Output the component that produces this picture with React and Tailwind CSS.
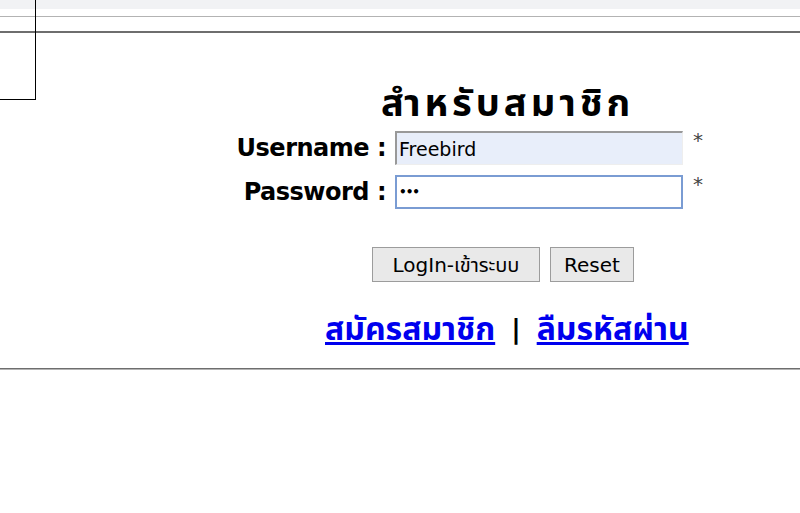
import React from "react";

export default function App() {
  const font = { fontFamily: '"DejaVu Sans", "Noto Sans Thai", "Noto Sans", sans-serif' };
  return (
    <div className="relative w-[800px] h-[513px] bg-white overflow-hidden" style={font}>
      <div className="absolute left-0 top-0 w-[36px] h-[100px] border-r border-b border-black" />
      <div className="h-[9px] bg-[#f1f2f4]" />
      <div className="h-[7px]" />
      <div className="h-px bg-[#b3b3b3]" />
      <div className="h-[14px]" />
      <div className="h-[2px] bg-[#6e6e6e]" />
      <div className="h-[335px] flex flex-col">
        <div className="pl-[381px] pt-[48px] h-[93px] text-[38px] font-bold leading-[44px] text-black tracking-[4px] whitespace-nowrap">สำหรับสมาชิก</div>
        <div className="flex items-center h-[44px]">
          <div className="w-[390px] pr-[4px] text-right text-[24px] font-bold text-black tracking-[-0.5px]">Username :</div>
          <input readOnly value="Freebird" className="ml-[5px] w-[288px] h-[34px] bg-[#e8eefa] border-t-2 border-l-2 border-t-[#999] border-l-[#999] border-r border-b border-r-[#eee] border-b-[#eee] px-[2px] text-[19px] text-black outline-none" style={{ fontFamily: '"DejaVu Sans", sans-serif' }} />
          <span className="ml-[10px] self-start mt-[2px] text-[20px] leading-[24px] text-[#444]">*</span>
        </div>
        <div className="flex items-center h-[44px]">
          <div className="w-[390px] pr-[4px] text-right text-[24px] font-bold text-black tracking-[-0.5px]">Password :</div>
          <div className="ml-[5px] w-[288px] h-[34px] border-2 border-[#7a9cd3] flex items-center px-[2px] text-[12px] font-bold text-black tracking-[-1px]">•••</div>
          <span className="ml-[10px] self-start mt-[2px] text-[20px] leading-[24px] text-[#444]">*</span>
        </div>
        <div className="flex gap-[10px] pl-[372px] pt-[33px]">
          <button className="h-[35px] w-[168px] bg-[#e9e9e9] border border-[#9c9c9c] text-[20px] text-black">LogIn-เข้าระบบ</button>
          <button className="h-[35px] w-[84px] bg-[#e9e9e9] border border-[#9c9c9c] text-[20px] text-black">Reset</button>
        </div>
        <div className="flex items-center pl-[325px] pt-[27px] text-[32px] leading-[40px] font-bold whitespace-nowrap">
          <a href="#" className="text-[#0000ee] underline">สมัครสมาชิก</a>
          <span className="mx-[16px] text-black text-[26px] font-bold">|</span>
          <a href="#" className="text-[#0000ee] underline">ลืมรหัสผ่าน</a>
        </div>
      </div>
      <div className="h-px bg-[#6e6e6e]" />
      <div className="h-px bg-[#b3b3b3]" />
    </div>
  );
}
